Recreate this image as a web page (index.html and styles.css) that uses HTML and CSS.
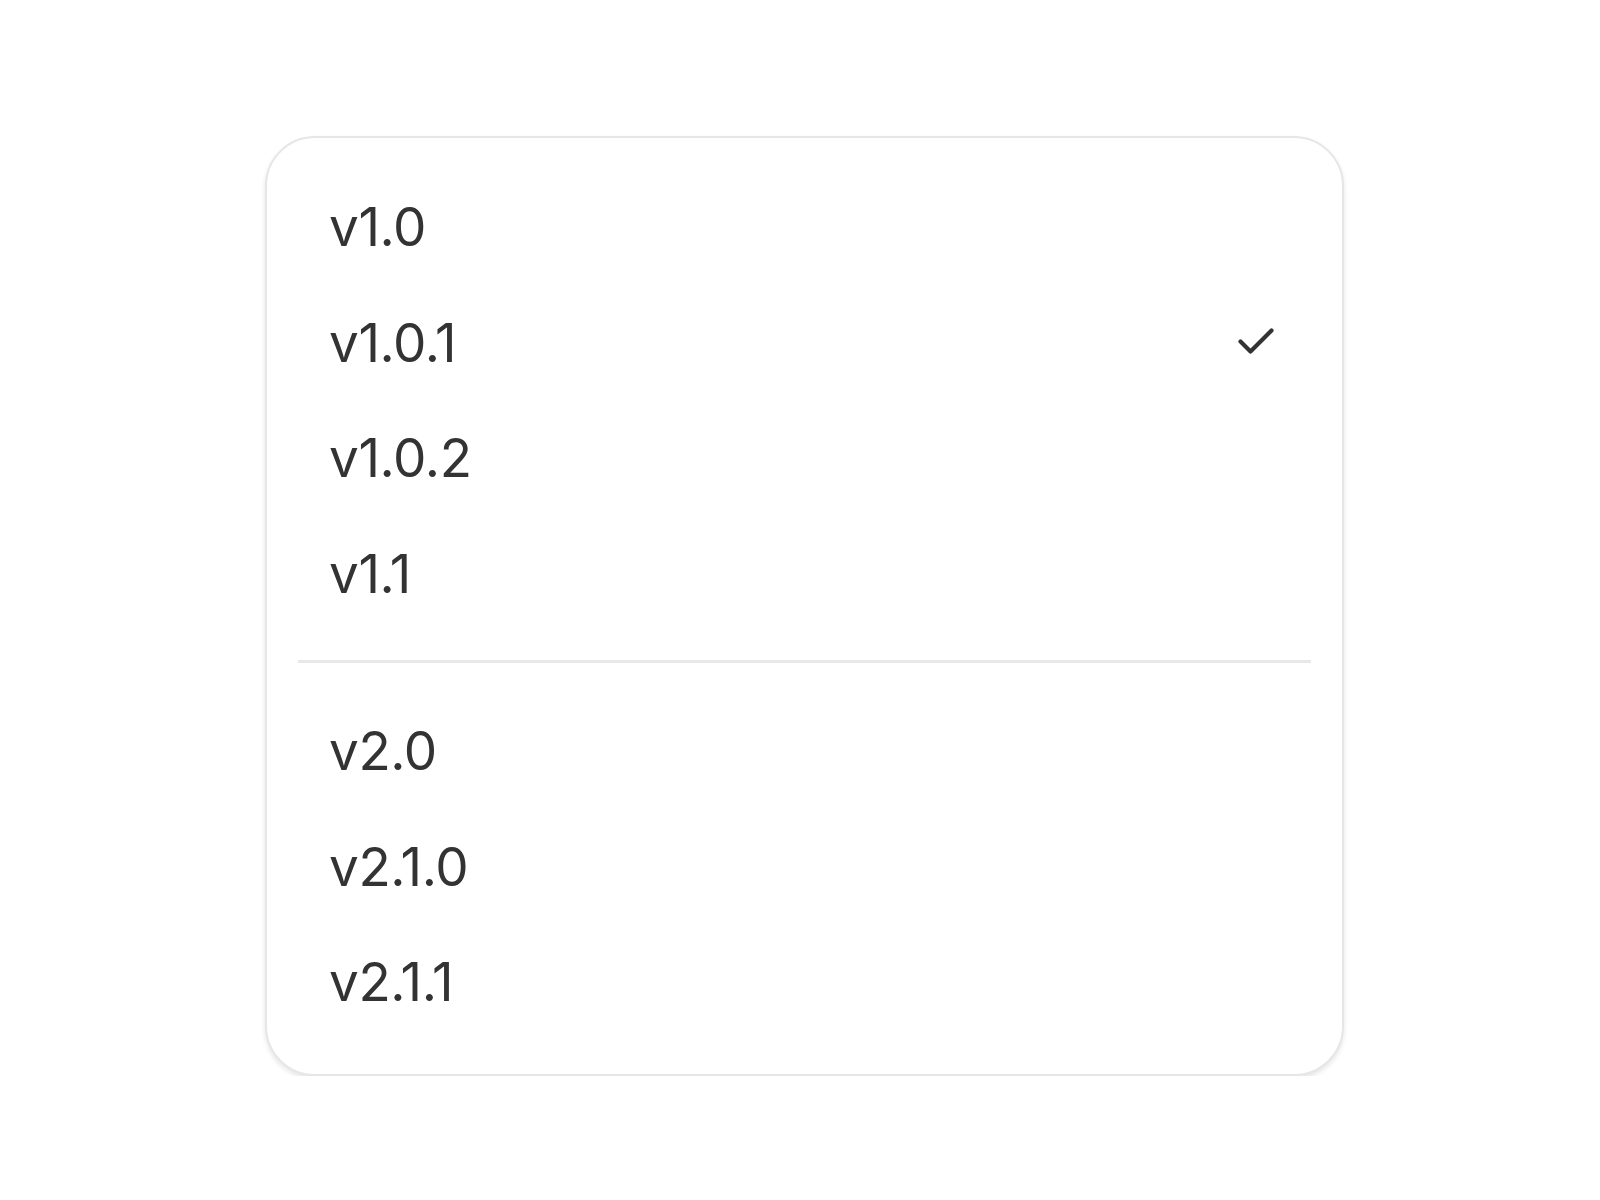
FILE: index.html
```html
<!DOCTYPE html>
<html lang="en">
<head>
<meta charset="utf-8">
<title>Versions</title>
<link rel="stylesheet" href="styles.css">
</head>
<body>
<div class="menu" role="listbox">
  <div class="group">
    <div class="item"><span class="label">v1.0</span></div>
    <div class="item selected"><span class="label">v1.0.1</span>
      <svg class="check" viewBox="0 0 36 28" width="36" height="28" aria-hidden="true"><path d="M2.5 14.5 L12.5 24.5 L33.5 3.5" fill="none" stroke="#333" stroke-width="4.2" stroke-linecap="round" stroke-linejoin="round"/></svg>
    </div>
    <div class="item"><span class="label">v1.0.2</span></div>
    <div class="item"><span class="label">v1.1</span></div>
  </div>
  <div class="divider"></div>
  <div class="group">
    <div class="item"><span class="label">v2.0</span></div>
    <div class="item"><span class="label">v2.1.0</span></div>
    <div class="item"><span class="label">v2.1.1</span></div>
  </div>
</div>
</body>
</html>
```
FILE: styles.css
```css
* { box-sizing: border-box; }
html, body { margin: 0; padding: 0; background: #ffffff; }
body {
  font-family: "Inter", "Noto Sans", "Liberation Sans", sans-serif;
  color: #333333;
  padding: 136px 0 0 265px;
}
.menu {
  width: 1079px;
  border: 2px solid #e6e6e6;
  border-radius: 50px;
  background: #fff;
  box-shadow: 0 3px 5px rgba(0, 0, 0, 0.1);
  padding: 32px 0 33px;
}
.item {
  height: 115.5px;
  display: flex;
  align-items: center;
  justify-content: space-between;
  padding: 0 68px 0 62px;
}
.label {
  font-size: 53px;
  line-height: 1;
  letter-spacing: -0.4px;
}
.check { display: block; margin-top: -5px; }
.divider {
  height: 3px;
  background: #e8e8e8;
  margin: 28px 31px 31px 31px;
}
```
